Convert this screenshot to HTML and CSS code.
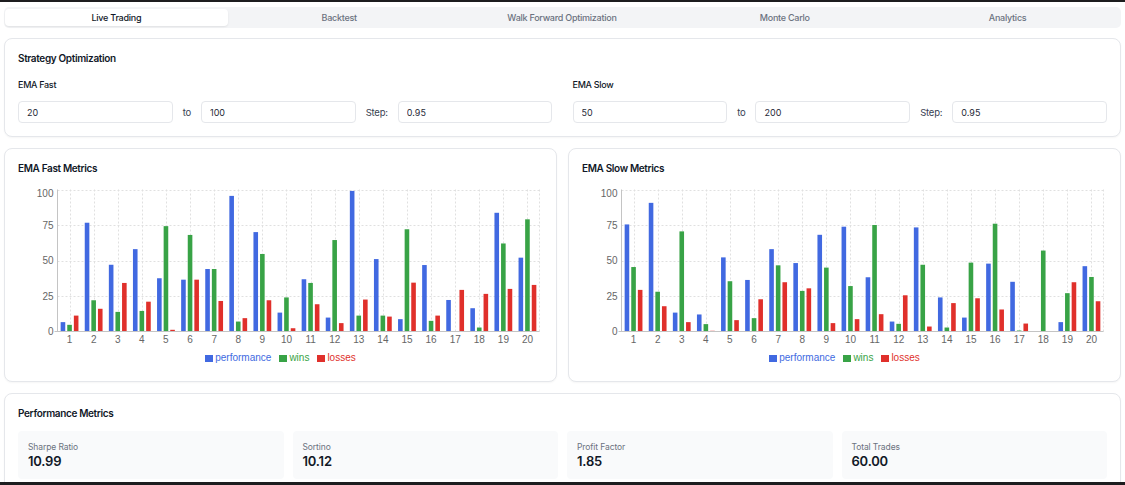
FILE: index.html
```html
<!DOCTYPE html>
<html lang="en">
<head>
<meta charset="utf-8">
<title>Strategy Optimization</title>
<link rel="stylesheet" href="styles.css">
</head>
<body>
<div class="page">
  <nav class="tabs">
    <button class="tab active">Live Trading</button>
    <button class="tab">Backtest</button>
    <button class="tab">Walk Forward Optimization</button>
    <button class="tab">Monte Carlo</button>
    <button class="tab">Analytics</button>
  </nav>

  <section class="card opt">
    <h2 class="card-title">Strategy Optimization</h2>
    <div class="opt-grid">
      <div class="param">
        <div class="param-label">EMA Fast</div>
        <div class="range-row">
          <input class="field" value="20" readonly>
          <span class="sep">to</span>
          <input class="field" value="100" readonly>
          <span class="sep">Step:</span>
          <input class="field" value="0.95" readonly>
        </div>
      </div>
      <div class="param">
        <div class="param-label">EMA Slow</div>
        <div class="range-row">
          <input class="field" value="50" readonly>
          <span class="sep">to</span>
          <input class="field" value="200" readonly>
          <span class="sep">Step:</span>
          <input class="field" value="0.95" readonly>
        </div>
      </div>
    </div>
  </section>

  <div class="charts">
    <section class="card chart-card">
      <h2 class="card-title">EMA Fast Metrics</h2>
      <svg class="chart" data-series="fast" width="524" height="172" viewBox="0 0 524 172"></svg>
      <div class="legend">
        <span class="legend-item perf-c"><i class="swatch"></i>performance</span>
        <span class="legend-item wins-c"><i class="swatch"></i>wins</span>
        <span class="legend-item loss-c"><i class="swatch"></i>losses</span>
      </div>
    </section>
    <section class="card chart-card">
      <h2 class="card-title">EMA Slow Metrics</h2>
      <svg class="chart" data-series="slow" width="524" height="172" viewBox="0 0 524 172"></svg>
      <div class="legend">
        <span class="legend-item perf-c"><i class="swatch"></i>performance</span>
        <span class="legend-item wins-c"><i class="swatch"></i>wins</span>
        <span class="legend-item loss-c"><i class="swatch"></i>losses</span>
      </div>
    </section>
  </div>

  <section class="card perf">
    <h2 class="card-title">Performance Metrics</h2>
    <div class="metrics">
      <div class="metric"><div class="metric-label">Sharpe Ratio</div><div class="metric-value">10.99</div></div>
      <div class="metric"><div class="metric-label">Sortino</div><div class="metric-value">10.12</div></div>
      <div class="metric"><div class="metric-label">Profit Factor</div><div class="metric-value">1.85</div></div>
      <div class="metric"><div class="metric-label">Total Trades</div><div class="metric-value">60.00</div></div>
    </div>
  </section>
</div>
<script src="chart.js"></script>
</body>
</html>
```

FILE: styles.css
```css
* { box-sizing: border-box; margin: 0; padding: 0; }
html { background: #fff; }
body {
  height: 485px;
  overflow: hidden;
  background: #fff;
  border-top: 2px solid #1d1d1f;
  border-bottom: 3px solid #1d1d1f;
  font-family: Inter, "Noto Sans", sans-serif;
  color: #111827;
}
.page {
  display: flex;
  flex-direction: column;
  gap: 11px;
  padding: 5px 4px 0;
}

/* tabs */
.tabs {
  display: grid;
  grid-template-columns: repeat(5, minmax(0, 1fr));
  background: #f3f4f6;
  border-radius: 5px;
  padding: 2px 2px 2px 1px;
  height: 21px;
}
.tab {
  font: 500 9px/17px Inter, sans-serif;
  letter-spacing: -0.25px;
  color: #6b7280;
  text-align: center;
  border: 0;
  border-radius: 4px;
  background: none;
}
.tab.active {
  background: #fff;
  color: #111827;
  box-shadow: 0 1px 2px rgba(0, 0, 0, 0.08);
}

/* cards */
.card {
  background: #fff;
  border: 1px solid #e5e7eb;
  border-radius: 8px;
  box-shadow: 0 1px 2px rgba(0, 0, 0, 0.04);
  padding: 13px;
}
.opt { margin-top: -1px; }
.card-title {
  font: 600 10px/13px Inter, sans-serif;
  letter-spacing: -0.35px;
  color: #111827;
}

/* optimization */
.opt-grid {
  display: grid;
  grid-template-columns: minmax(0, 1fr) minmax(0, 1fr);
  gap: 20px;
  margin-top: 14px;
}
.param { min-width: 0; }
.param-label {
  font: 500 9px/12px Inter, sans-serif;
  letter-spacing: -0.3px;
  color: #111827;
  margin-bottom: 10px;
}
.range-row {
  display: flex;
  align-items: center;
  gap: 10px;
}
.field {
  flex: 1 1 0;
  width: 0;
  min-width: 0;
  height: 22px;
  border: 1px solid #e5e7eb;
  border-radius: 4px;
  padding: 0 8px;
  font: 400 9px Inter, sans-serif;
  color: #1f2937;
  background: #fff;
  outline: none;
}
.sep {
  font: 400 9.5px Inter, sans-serif;
  letter-spacing: -0.2px;
  color: #374151;
}

/* charts */
.charts {
  display: grid;
  grid-template-columns: minmax(0, 1fr) minmax(0, 1fr);
  gap: 11px;
}
.chart-card { padding-bottom: 17px; }
.chart {
  display: block;
  margin-top: 3px;
  overflow: visible;
}
.chart .grid line {
  stroke: #e0e0e0;
  stroke-width: 1;
  stroke-dasharray: 2 2;
}
.chart .axis line {
  stroke: #c4c4c4;
  stroke-width: 1;
}
.chart .tick-label text {
  font: 10px "Liberation Sans", Arial, sans-serif;
  fill: #666;
}
.legend {
  display: flex;
  justify-content: center;
  gap: 8px;
  margin-top: 2px;
  font: 10px/12px "Liberation Sans", Arial, sans-serif;
}
.legend-item {
  display: flex;
  align-items: center;
  gap: 2px;
}
.swatch {
  display: block;
  width: 8px;
  height: 7px;
}
.perf-c { color: #4169e1; }
.perf-c .swatch { background: #4169e1; }
.wins-c { color: #38a346; }
.wins-c .swatch { background: #38a346; }
.loss-c { color: #e0302b; }
.loss-c .swatch { background: #e0302b; }

/* performance metrics */
.metrics {
  display: grid;
  grid-template-columns: repeat(4, minmax(0, 1fr));
  gap: 9px;
  margin-top: 11px;
}
.metric {
  background: #f9fafb;
  border-radius: 4px;
  padding: 10px 10px;
}
.metric-label {
  font: 400 8.5px/12px Inter, sans-serif;
  letter-spacing: -0.1px;
  color: #6b7280;
}
.metric-value {
  font: 600 13px/16px Inter, sans-serif;
  letter-spacing: -0.2px;
  color: #111827;
}
```

FILE: chart.js
```js
(function () {
  var NS = 'http://www.w3.org/2000/svg';
  var COLORS = ['#4169e1', '#38a346', '#e0302b'];
  var DATA = {
    fast: [
      [6.6, 4.7, 11.2], [76.6, 22, 16], [47, 13.8, 34.2], [58, 14.5, 21], [37.5, 74.2, 1.2],
      [36.5, 68, 36.5], [44, 44, 21.5], [95.5, 7, 9.4], [70, 54.6, 22], [13.3, 24, 2.3],
      [36.8, 34.2, 19.2], [9.8, 64.4, 5.9], [99, 11.2, 22.5], [51, 11.2, 10.5], [8.7, 72, 34.4],
      [46.8, 7.5, 11.2], [22.2, 0, 29.3], [16.4, 2.8, 26.5], [83.6, 62, 30], [52, 79, 32.8]
    ],
    slow: [
      [75.4, 45.4, 29.3], [90.6, 28, 17.8], [13.3, 70.5, 6.6], [12, 5.2, 0.5], [52.2, 35.4, 8],
      [36.3, 9.4, 22.7], [58, 46.6, 34.7], [48.2, 28.6, 30.4], [68.1, 45, 5.9], [73.8, 32, 8.7],
      [38.2, 75, 12.2], [7, 5.4, 25.5], [73.3, 47, 3.5], [24, 2.8, 20], [9.8, 48.5, 23.4],
      [47.8, 75.9, 15.5], [35, 0.7, 5.6], [0, 57, 0.3], [6.6, 27, 34.7], [46, 38.4, 21.3]
    ]
  };
  var L = 39.5, R = 521.5, T = 11.5, B = 153.5;
  var H = B - T, W = R - L, N = 20, CW = W / N, SLOT = 6.6, BW = 4.6;

  function el(tag, attrs, parent, text) {
    var e = document.createElementNS(NS, tag);
    for (var k in attrs) e.setAttribute(k, attrs[k]);
    if (text != null) e.textContent = text;
    parent.appendChild(e);
    return e;
  }
  function y(v) { return B - v / 100 * H; }

  var svgs = document.querySelectorAll('svg.chart');
  for (var s = 0; s < svgs.length; s++) {
    var svg = svgs[s];
    var d = DATA[svg.getAttribute('data-series')];
    var grid = el('g', { 'class': 'grid' }, svg);
    [25, 50, 75, 100].forEach(function (v) {
      var yy = Math.round(y(v)) + 0.5;
      el('line', { x1: L, x2: R, y1: yy, y2: yy }, grid);
    });
    for (var i = 0; i < N; i++) {
      var gx = Math.round(L + CW * (i + 0.5)) + 0.5;
      el('line', { x1: gx, x2: gx, y1: T, y2: B }, grid);
    }
    el('line', { x1: R, x2: R, y1: T, y2: B }, grid);

    var bars = el('g', {}, svg);
    d.forEach(function (g, idx) {
      var cx = L + CW * (idx + 0.5);
      g.forEach(function (v, j) {
        if (v <= 0) return;
        var x = cx + (j - 1) * SLOT - BW / 2;
        el('rect', { x: x.toFixed(2), y: y(v).toFixed(2), width: BW, height: (v / 100 * H).toFixed(2), fill: COLORS[j] }, bars);
      });
    });

    var axes = el('g', { 'class': 'axis' }, svg);
    el('line', { x1: L, x2: L, y1: T, y2: B }, axes);
    el('line', { x1: L - 3, x2: R, y1: B, y2: B }, axes);

    var labels = el('g', { 'class': 'tick-label' }, svg);
    [0, 25, 50, 75, 100].forEach(function (v) {
      var yy = y(v) + 3.5 + (v === 100 ? 4 : 0);
      el('text', { x: L - 4, y: yy.toFixed(1), 'text-anchor': 'end' }, labels, String(v));
    });
    for (i = 0; i < N; i++) {
      el('text', { x: (L + CW * (i + 0.5)).toFixed(1), y: B + 11, 'text-anchor': 'middle' }, labels, String(i + 1));
    }
  }
})();
```
